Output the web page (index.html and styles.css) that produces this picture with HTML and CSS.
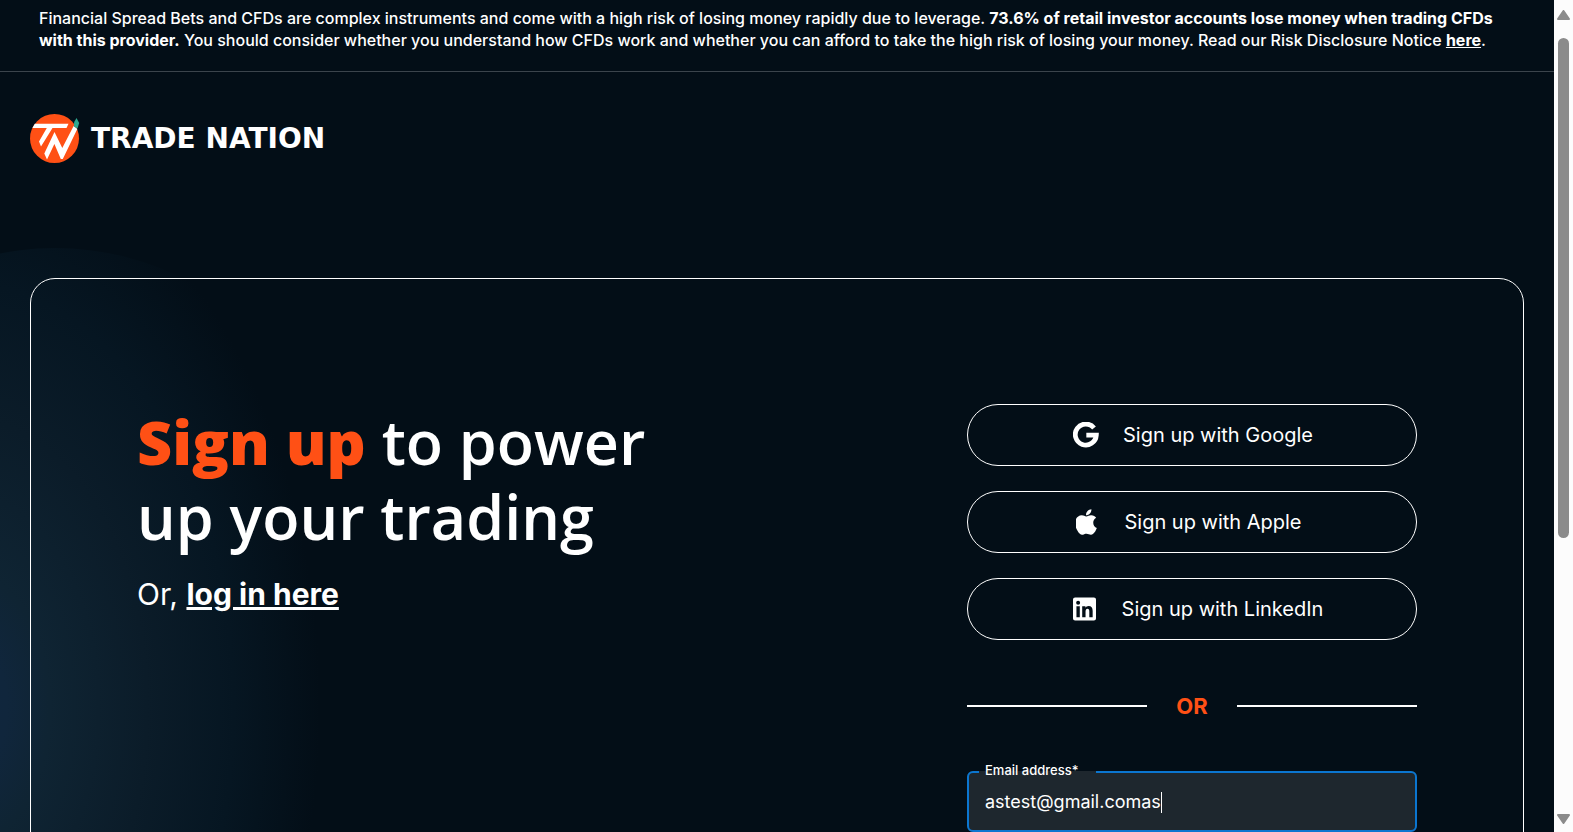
FILE: index.html
```html
<!DOCTYPE html>
<html lang="en">
<head>
<meta charset="utf-8">
<meta name="viewport" content="width=device-width, initial-scale=1">
<title>Sign up | Trade Nation</title>
<link rel="stylesheet" href="styles.css">
</head>
<body class="shell">
<div class="page">
  <p class="risk">Financial Spread Bets and CFDs are complex instruments and come with a high risk of losing money rapidly due to leverage. <strong>73.6% of retail investor accounts lose money when trading CFDs with this provider.</strong> You should consider whether you understand how CFDs work and whether you can afford to take the high risk of losing your money. Read our Risk Disclosure Notice <a class="risk-link" href="#risk">here</a>.</p>
  <header class="header">
    <a class="brand" href="#home">
      <svg class="brand-mark" viewBox="0 0 50 50" aria-hidden="true">
        <circle cx="24.500" cy="24.500" r="24.500" fill="#ff5015"/>
        <path fill="#fff" d="M4.800 9.700H38.500L36.500 14H22.500L11 32.500L9 27.500L16.800 14H2.400Z"/>
        <path fill="#fff" d="M24.500 18L32.300 34L43.600 12L47.300 15L32.800 45H30.800L24.400 30L17 45.500L14.300 39.500Z"/>
        <path fill="#2fa890" d="M46.500 4L49.200 9L47.500 14.500L43.800 12.500L44.200 8Z"/>
      </svg>
      <span class="brand-name">TRADE NATION</span>
    </a>
  </header>
  <main class="card">
    <section class="intro">
      <h1 class="title"><span class="accent">Sign up</span> to power up your trading</h1>
      <p class="login">Or, <a class="login-link" href="#login">log in here</a></p>
    </section>
    <form class="signup">
      <button class="social social-google" type="button">
        <svg class="social-icon" viewBox="0 0 24 24" aria-hidden="true"><path fill="none" stroke="#fff" stroke-width="4.400" d="M19.400 5.500A9.700 9.700 0 1 0 21.500 12.200H12.300"/></svg>
        Sign up with Google</button>
      <button class="social social-apple" type="button">
        <svg class="social-icon" viewBox="5 2.900 14.700 18.200" aria-hidden="true"><path fill="#fff" d="M17.050 20.280c-.98.95-2.050.8-3.080.35-1.090-.46-2.090-.48-3.240 0-1.440.62-2.200.44-3.060-.35C2.790 15.250 3.510 7.590 9.050 7.310c1.350.07 2.290.74 3.080.8 1.180-.24 2.310-.93 3.570-.84 1.510.12 2.650.72 3.400 1.800-3.120 1.870-2.380 5.980.48 7.130-.57 1.500-1.310 2.990-2.530 4.080zM12.030 7.250c-.15-2.230 1.660-4.070 3.740-4.250.29 2.580-2.340 4.500-3.740 4.250z"/></svg>
        Sign up with Apple</button>
      <button class="social social-linkedin" type="button">
        <svg class="social-icon" viewBox="1 1 22 22" aria-hidden="true"><path fill="#fff" fill-rule="evenodd" d="M3 1H21A2 2 0 0 1 23 3V21A2 2 0 0 1 21 23H3A2 2 0 0 1 1 21V3A2 2 0 0 1 3 1ZM4.300 9.300V19.800H7.500V9.300ZM5.900 4.100A1.900 1.900 0 1 0 5.900 7.900A1.900 1.900 0 1 0 5.900 4.100ZM9.800 9.300V19.800H13V14.600C13 12.700 13.600 11.800 14.900 11.800C16.100 11.800 16.600 12.700 16.600 14.400V19.800H19.800V13.800C19.800 10.800 18.500 9.100 16 9.100C14.500 9.100 13.500 9.800 12.900 10.700V9.300Z"/></svg>
        Sign up with LinkedIn</button>
      <div class="divider"><span class="divider-text">OR</span></div>
      <fieldset class="field">
        <legend class="field-legend"><label for="email">Email address*</label></legend>
        <div class="field-row">
          <input class="field-input" id="email" type="text" value="astest@gmail.comas"><span class="caret"></span>
        </div>
      </fieldset>
    </form>
  </main>
</div>
<div class="scrollbar" aria-hidden="true">
  <svg class="arrow" viewBox="0 0 13 10"><path d="M6.500 1L12 9H1Z" fill="#8b8b8b" stroke="#8b8b8b" stroke-width="2" stroke-linejoin="round"/></svg>
  <div class="track"><div class="thumb"></div></div>
  <svg class="arrow" viewBox="0 0 13 10"><path d="M6.500 9L12 1H1Z" fill="#8b8b8b" stroke="#8b8b8b" stroke-width="2" stroke-linejoin="round"/></svg>
</div>
</body>
</html>
```
FILE: styles.css
```css
* { box-sizing: border-box; }
.shell {
  margin: 0;
  display: flex;
  height: 100vh;
  overflow: hidden;
  background: #030e17;
  color: #fff;
  font-family: Inter, "Liberation Sans", sans-serif;
}
.page {
  position: relative;
  flex: 1;
  min-width: 0;
  overflow: hidden;
  isolation: isolate;
}
.page::before {
  content: "";
  position: absolute;
  z-index: -1;
  left: -305px;
  top: 248px;
  width: 720px;
  height: 920px;
  border-radius: 50%;
  background: radial-gradient(ellipse 360px 560px at 265px 460px, #10263f 0, #10263c 13%, #0f2433 25%, #0b1c29 52%, #061622 76%, #030e17 100%);
}
.risk {
  margin: 0;
  padding: 7px 39px 20px;
  border-bottom: 1px solid #3b444c;
  font-size: 16px;
  line-height: 22px;
  font-weight: 500;
}
.risk-link {
  color: inherit;
  font-weight: 700;
}
.header { padding: 42px 30px 0; }
.brand {
  display: flex;
  align-items: center;
  gap: 11px;
  color: inherit;
  text-decoration: none;
}
.brand-mark {
  width: 50px;
  height: 50px;
}
.brand-name {
  font: 700 28px/32px "DejaVu Sans", sans-serif;
}
.card {
  display: flex;
  justify-content: space-between;
  gap: 40px;
  margin: 114px 30px 0;
  padding: 125px 106px;
  border: 1px solid #fff;
  border-radius: 25px;
}
.intro { flex: 0 1 560px; }
.title {
  margin: 0;
  font: 600 61px/75px "Open Sans", sans-serif;
}
.accent {
  color: #ff5015;
  font-weight: 800;
}
.login {
  margin: 20px 0 0;
  font-size: 30px;
  line-height: 40px;
}
.login-link {
  color: inherit;
  font-weight: 700;
}
.signup {
  flex: 0 1 450px;
  display: flex;
  flex-direction: column;
  gap: 25px;
}
.social {
  display: flex;
  align-items: center;
  justify-content: center;
  height: 62px;
  padding: 0;
  border: 1px solid #fff;
  border-radius: 31px;
  background: transparent;
  color: inherit;
  font: 400 20px/24px Inter, sans-serif;
}
.social-google {
  gap: 24px;
  padding-left: 2px;
}
.social-apple {
  gap: 27px;
  padding-right: 6px;
}
.social-linkedin {
  gap: 26px;
  padding-left: 12px;
}
.social-icon {
  width: 26px;
  height: 26px;
}
.social-apple .social-icon { width: 21px; }
.social-linkedin .social-icon { width: 23px; }
.divider {
  display: flex;
  align-items: center;
  padding: 27px 0 17px;
  color: #ff5015;
  font-size: 22px;
  line-height: 28px;
  font-weight: 700;
}
.divider::before,
.divider::after {
  content: "";
  flex: 1;
  height: 2px;
  background: #fff;
}
.divider-text {
  width: 90px;
  text-align: center;
}
.field {
  min-width: 0;
  margin: 0;
  padding: 0 16px 8px;
  border: 2px solid #0b76d0;
  border-radius: 6px;
  background: #1e272e;
}
.field-legend {
  width: 117px;
  margin-left: -6px;
  padding: 0 6px 4px;
  font-size: 13px;
  line-height: 16px;
  font-weight: 500;
}
.field-row {
  display: flex;
  align-items: center;
  height: 40px;
}
.field-input {
  field-sizing: content;
  padding: 0;
  border: 0;
  outline: 0;
  background: transparent;
  color: inherit;
  font: 400 18px/24px Inter, sans-serif;
}
.caret {
  width: 1px;
  height: 21px;
  background: #fff;
}
.scrollbar {
  display: flex;
  flex-direction: column;
  align-items: center;
  gap: 18px;
  width: 19px;
  padding: 10px 0 8px;
  background: #fcfcfc;
}
.arrow {
  width: 13px;
  height: 10px;
}
.track {
  flex: 1;
  width: 11px;
}
.thumb {
  height: 66%;
  border-radius: 6px;
  background: #8b8b8b;
}
```
